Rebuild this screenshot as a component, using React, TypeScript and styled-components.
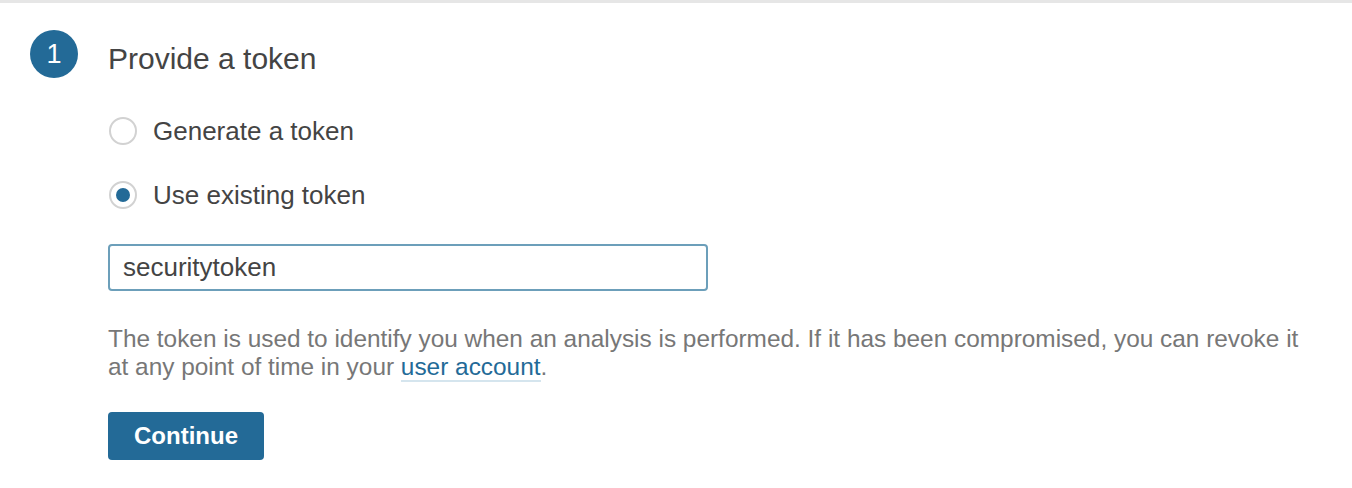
import React, { useState } from 'react'
import styled, { createGlobalStyle } from 'styled-components'

const GlobalStyle = createGlobalStyle`
    html, body {
        margin: 0;
        padding: 0;
        background: #fff;
    }
    body {
        font-family: "Liberation Sans", Arial, Helvetica, sans-serif;
        color: #444;
    }
`

const Page = styled.div`
    border-top: 3px solid #e6e6e6;
    padding: 24px 30px 28px 30px;
`

const Step = styled.div`
    display: grid;
    grid-template-columns: 48px 1fr;
    column-gap: 30px;
`

const StepNumber = styled.div`
    width: 48px;
    height: 48px;
    border-radius: 50%;
    background: #236a97;
    color: #fff;
    font-size: 27px;
    line-height: 1;
    display: flex;
    align-items: center;
    justify-content: center;
    margin-top: 3px;
`

const Title = styled.h2`
    margin: 5px 0 0 0;
    font-weight: normal;
    font-size: 30px;
    line-height: 54px;
    color: #444;
`

const Options = styled.div`
    display: flex;
    flex-direction: column;
    gap: 34px;
    margin-top: 30px;
`

const Option = styled.label`
    display: flex;
    align-items: center;
    gap: 16px;
    font-size: 26px;
    line-height: 30px;
    color: #444;
    cursor: pointer;
`

const Radio = styled.span<{ $checked: boolean }>`
    box-sizing: border-box;
    width: 28px;
    height: 28px;
    margin-left: 1px;
    border-radius: 50%;
    border: 2px solid #d2d2d2;
    display: flex;
    align-items: center;
    justify-content: center;
    background: #fff;

    &::after {
        content: '';
        display: ${(p) => (p.$checked ? 'block' : 'none')};
        width: 14px;
        height: 14px;
        border-radius: 50%;
        background: #236a97;
    }
`

const TokenInput = styled.input`
    box-sizing: border-box;
    width: 600px;
    height: 47px;
    margin-top: 34px;
    padding: 0 13px;
    border: 2px solid #6c9fba;
    border-radius: 4px;
    font-family: inherit;
    font-size: 26px;
    color: #444;
    outline: none;
`

const Help = styled.p`
    margin: 34px 0 0 0;
    max-width: 1195px;
    font-size: 24.4px;
    line-height: 28px;
    color: #777;
`

const Link = styled.a`
    color: #236a97;
    text-decoration: none;
    border-bottom: 2px solid #d5e5ee;
`

const Button = styled.button`
    margin-top: 31px;
    width: 156px;
    height: 48px;
    border: none;
    border-radius: 4px;
    background: #236a97;
    color: #fff;
    font-family: inherit;
    font-weight: bold;
    font-size: 24px;
    cursor: pointer;
`

const Body = styled.div`
    display: flex;
    flex-direction: column;
    align-items: flex-start;
`

export default function App() {
    const [mode, setMode] = useState<'generate' | 'existing'>('existing')
    const [token, setToken] = useState('securitytoken')

    return (
        <Page>
            <GlobalStyle />
            <Step>
                <StepNumber>1</StepNumber>
                <Body>
                    <Title>Provide a token</Title>
                    <Options>
                        <Option onClick={() => setMode('generate')}>
                            <Radio $checked={mode === 'generate'} />
                            Generate a token
                        </Option>
                        <Option onClick={() => setMode('existing')}>
                            <Radio $checked={mode === 'existing'} />
                            Use existing token
                        </Option>
                    </Options>
                    <TokenInput value={token} onChange={(e) => setToken(e.target.value)} />
                    <Help>
                        The token is used to identify you when an analysis is performed. If it has been compromised, you can revoke it
                        at any point of time in your <Link href="#">user account</Link>.
                    </Help>
                    <Button>Continue</Button>
                </Body>
            </Step>
        </Page>
    )
}
